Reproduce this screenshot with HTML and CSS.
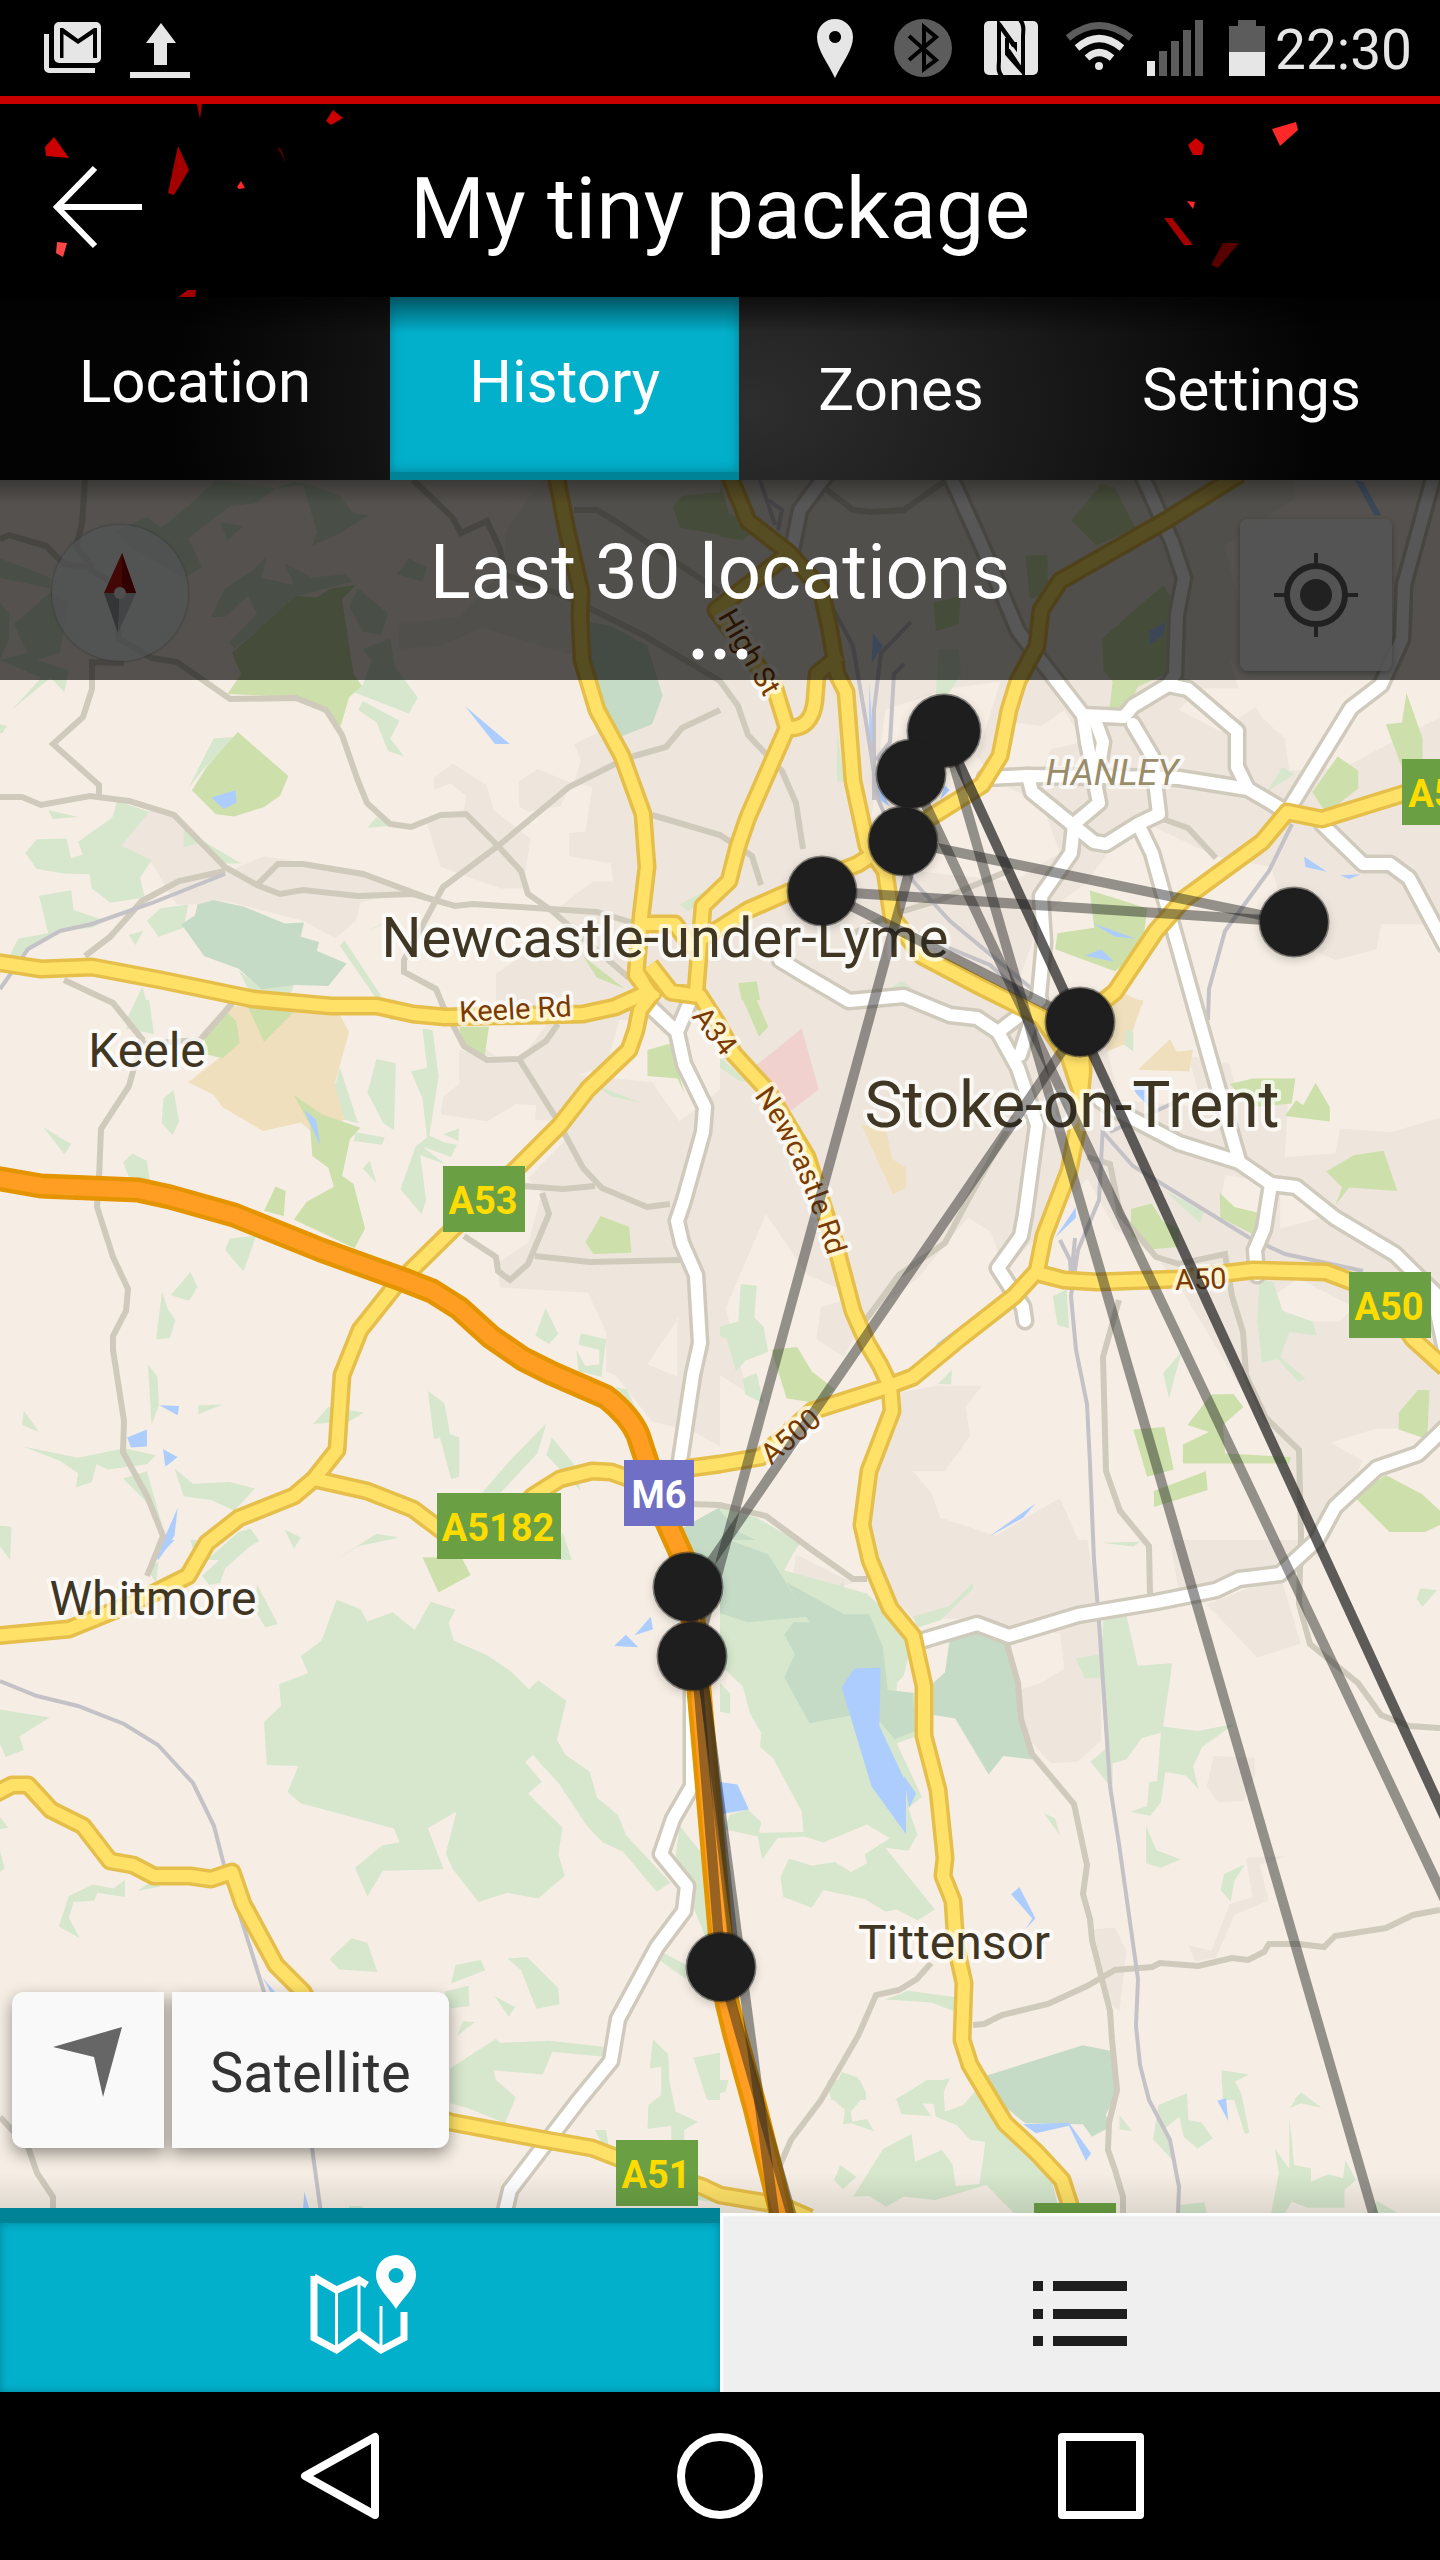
FILE: index.html
```html
<!DOCTYPE html>
<html lang="en">
<head>
  <meta charset="UTF-8">
  <meta name="viewport" content="width=device-width, initial-scale=1.0">
  <title>My tiny package</title>
  <link rel="stylesheet" href="styles.css">
</head>
<body>
  <!-- Status bar -->
  <div class="status-bar">
    <svg class="status-left" viewBox="36 0 164 96" width="164" height="96">
      <path class="lit" fill-rule="evenodd" d="M59 22H96a5 5 0 0 1 5 5V58a5 5 0 0 1-5 5H59a5 5 0 0 1-5-5V27a5 5 0 0 1 5-5ZM60 28V58H63.500V34L78 44L93 34V58H97V28H94L78 39L63 28Z"/>
      <path class="lit" d="M44 34H49V68H95V73H49a5 5 0 0 1-5-5Z"/>
      <path class="lit" d="M161 23L176 43H167V65H154V43H146ZM130 72H190V78H130Z"/>
    </svg>
    <svg class="status-right" viewBox="805 0 466 96" width="466" height="96">
      <path class="lit" fill-rule="evenodd" d="M835 19a18 18 0 0 1 18 18C853 50 842 63 835 78C828 63 817 50 817 37a18 18 0 0 1 18-18ZM835 31a6 6 0 1 0 .1 0Z"/>
      <circle class="dim" cx="923" cy="48" r="29"/>
      <path d="M909 36L936 60L924 69V27L936 37L909 60" fill="none" stroke="#000" stroke-width="4"/>
      <rect class="lit" x="984" y="21" width="54" height="54" rx="5"/>
      <path d="M1002 76C997 72 999 66 999 60V24L1014 46M1020 20C1025 25 1023 31 1023 37V72L1008 50" fill="none" stroke="#000" stroke-width="4"/>
      <path d="M999 24L1015 46V42M1007 38V54L1023 72" fill="none" stroke="#000" stroke-width="4"/>
      <g fill="none" stroke-width="7">
        <path stroke="#5c5c5c" d="M1068 38Q1099 13 1131 38"/>
        <path stroke="#e6e6e6" d="M1077 48Q1099 29 1122 48M1087 58Q1099 47 1112 58"/>
      </g>
      <circle class="lit" cx="1099" cy="66" r="4"/>
      <path class="lit" d="M1147 61h8v15h-8Z"/>
      <path class="dim" d="M1159 51h8v25h-8ZM1171 41h8v35h-8ZM1183 30h8v46h-8ZM1195 20h8v56h-8Z"/>
      <path class="dim" d="M1238 20h18v6h9v26h-36v-26h9Z"/>
      <path class="lit" d="M1229 52h36v24h-36Z"/>
    </svg>
    <time class="clock">22:30</time>
  </div>

  <!-- Header -->
  <header class="header">
    <svg class="shards" viewBox="0 104 1440 193" preserveAspectRatio="xMidYMid slice">
      <path fill="#cc0000" d="M54 137L69 158L46 156L45 147ZM333 110L343 118L331 125L326 121ZM1188 145L1196 138L1204 145L1202 155L1193 155Z"/>
      <path fill="#a50000" d="M178 146L189 170L174 195L168 193ZM197 104L202 104L200 119ZM178 297L188 290L196 290L195 297ZM1164 218L1172 218L1193 245L1184 245Z"/>
      <path fill="#560000" d="M277 147L281 149L286 163ZM1223 243L1239 243L1218 268L1211 265Z"/>
      <path fill="#ff2828" d="M1272 129L1296 122L1298 130L1280 146ZM237 187L241 181L245 188L239 189ZM1187 201L1195 202L1193 209Z"/>
      <path fill="#ff4646" d="M57 242L67 243L63 257L56 253Z"/>
    </svg>
    <button class="back" aria-label="Back">
      <svg viewBox="0 0 100 90" width="100" height="90"><path d="M48 6L10 45L48 84M10 45H95" fill="none" stroke="#fff" stroke-width="6"/></svg>
    </button>
    <h1 class="title">My tiny package</h1>
  </header>

  <!-- Tabs -->
  <nav class="tabs">
    <a class="tab tab-raised" href="#location">Location</a>
    <a class="tab tab-raised tab-active" href="#history">History</a>
    <a class="tab" href="#zones">Zones</a>
    <a class="tab" href="#settings">Settings</a>
  </nav>

  <!-- Map -->
  <main class="map">
    <svg class="map-canvas" viewBox="0 480 1440 1733" preserveAspectRatio="xMidYMid slice">
      <defs>
        <path id="motorway" d="M-5 1178L41 1186L138 1190L170 1197L234 1215L321 1250L404 1280L432 1291L459 1308L491 1337L523 1359L551 1373L606 1397Q630 1416 638 1435L666 1520L684 1560Q694 1610 699 1690L720 1930L727 2002L735 2035L755 2107L783 2220"/>
        <g id="a-roads">
          <path d="M556 475L567 531L581 592L580 617L582 660L597 710L622 756L643 814L647 867L641 917L636 975L655 1000"/>
          <path d="M-5 962L41 969L92 967L161 980L253 999L331 1006L377 1006L413 1014L445 1017L583 1014L615 1007L648 992L636 970"/>
          <path d="M655 990L640 1010L636 1030L629 1050L588 1089L560 1125L519 1166L450 1232L395 1286L360 1330L342 1375L337 1450L314 1479L294 1496L239 1518L207 1543L188 1576L138 1601L69 1629L-5 1636"/>
          <path d="M314 1479L367 1491L413 1509L445 1533L500 1530L533 1496L560 1479L592 1471L611 1472L650 1486L690 1468L720 1464L761 1457L812 1411L881 1389L913 1377L959 1339L1014 1296L1037 1271L1044 1236L1069 1171L1078 1125L1083 1071L1080 1021"/>
          <path d="M729 475L748 521L789 553L821 589L830 631L837 674L846 692L853 781L867 846L885 871L892 917L922 956L977 985L1041 1017L1069 1057L1083 1100"/>
          <path d="M789 553L716 610L748 653L775 689L787 728Q812 730 815 700L817 674L840 655"/>
          <path d="M787 728L748 817L738 846L729 881L703 906L696 992"/>
          <path d="M641 924L675 924L690 945L720 928L748 910L789 892L858 864L931 817L982 785L1000 756L1009 710L1018 681L1037 646L1041 610L1060 581L1165 521L1240 474"/>
          <path d="M1080 1020L1115 992L1156 931L1184 899L1262 842L1287 812L1322 819L1409 792L1445 780"/>
          <path d="M1037 1273L1064 1280L1097 1282L1179 1279L1253 1270L1326 1272L1363 1286L1400 1320L1413 1339L1445 1368"/>
          <path d="M650 965L671 992L700 996L716 1021L734 1054L766 1089L807 1157L835 1243L853 1311L867 1343L880 1365L890 1386L892 1411L869 1471L862 1525L870 1560L890 1608L913 1636L924 1686L924 1736L938 1790L945 1858L943 1876L953 1901L956 1947L964 1983L962 2040L970 2065L991 2100L1005 2123L1037 2153L1062 2180L1075 2220"/>
          <path d="M-5 1794L12 1785L28 1785L51 1810L83 1826L110 1861L133 1865L154 1876L190 1876L211 1879L232 1872L243 1904L276 1965L303 1992L360 2090L450 2122L546 2140L592 2148L618 2158L703 2187L720 2195L780 2205L810 2218"/>
        </g>
        <g id="b-roads">
          <path d="M643 1000L677 1032L684 1064L705 1107L703 1132L684 1200L677 1221L682 1243L696 1275L700 1343L693 1375L680 1461M689 1004L677 1032"/>
          <path d="M692 1690L692 1786L673 1819L661 1854L687 1886L684 1911L657 1947L618 2019L611 2061L579 2100L546 2143L510 2190L503 2220"/>
          <path d="M950 475L982 546L1018 631L1083 715L1124 717L1133 706L1168 685L1188 689L1237 731L1237 767L1248 789L1287 812"/>
          <path d="M1142 475L1172 542L1184 578L1177 614L1175 674L1168 685M826 475L800 510L792 550"/>
          <path d="M1434 475L1404 585L1402 639L1381 685L1351 708L1287 812"/>
          <path d="M985 778L1028 776L1179 778L1248 789M1095 720L1103 742L1100 760"/>
          <path d="M1083 715L1087 742L1099 803L1074 824L1071 853L1041 896L1044 942L1039 996L1020 1055"/>
          <path d="M1133 724L1152 756L1159 814L1138 824L1106 844L1094 842L1032 792L1028 776"/>
          <path d="M1140 828L1152 853L1198 1017L1239 1161"/>
          <path d="M1100 1100L1110 1107L1179 1143L1239 1162L1271 1184L1296 1187L1335 1218L1395 1254L1445 1303M1445 1350L1432 1290"/>
          <path d="M1271 1184L1264 1229L1255 1250L1257 1275"/>
          <path d="M780 960L803 974L849 1001L904 996L950 1015L977 1018L998 1032L1018 1068L1037 1125L1025 1214L1021 1236L998 1268L1023 1307L1025 1321M998 1032L1040 1000"/>
          <path d="M917 1642L977 1624L1009 1636L1078 1615L1156 1602L1216 1590L1239 1579L1280 1574L1317 1540L1335 1507L1377 1468L1418 1454L1445 1428"/>
          <path d="M1322 824L1363 864L1390 864L1409 878L1445 945"/>
        </g>
        <path id="newcastle-rd" d="M754 1096Q796 1150 832 1270"/>
      </defs>

      <rect class="ground" x="0" y="470" width="1440" height="1760"/>

      <!-- land use, one group per tile -->
      <g transform="translate(0 460) scale(.4592 .3571)">
        <path class="urban" d="M1100 200L1180 56H1568V1568H1080V1440L1230 1300L1210 1260L1290 1180H1335L1330 1130L1240 1110V1045L1275 1040L1290 915L1250 905L1265 840L1250 795L1300 765L1280 560L1050 470L960 520L870 530L865 460L1000 440L1100 300Z"/>
        <path class="urban" d="M945 890L985 850L1060 910L1075 980L1155 1060L1140 1200H1090L960 1140L930 1020L1010 980L1015 940L980 905L945 925ZM1130 900L1170 865L1245 905L1220 970L1150 985L1130 970ZM330 975L380 995L500 1150L575 1110L780 1150L880 1210L785 1240L775 1290L730 1340L660 1290L490 1235L430 1245H385L330 1130L265 1080Z"/>
        <path class="wood" d="M400 140L470 56L600 80L560 120L500 130L410 220L440 300L400 330L280 240L250 200L320 160L350 190ZM600 80L660 70L690 200L680 240L740 205L805 155L770 150L740 100L690 75L640 60ZM480 175L530 185L495 225ZM0 275L110 330V360L0 330ZM0 400L20 430V500L0 560ZM30 460L110 370L150 400L130 540L80 560L150 590L140 650L110 610L25 700L90 610L0 560L60 540ZM460 440L490 360L550 310L580 270L570 330L640 350L620 290L680 330L750 320L770 340L650 380L510 530L500 510L560 430L540 380L490 440ZM865 320L890 275L930 300L920 340ZM780 360L845 430L830 490L790 480L760 410ZM790 530L850 500L860 580L910 665L890 710L770 650L790 630L810 560ZM790 675L870 730L850 780L880 830L845 815L820 735L780 700ZM465 780L515 775L440 870L410 920ZM0 740L15 745L5 765H0ZM105 980L170 1000L115 1005ZM255 955L325 985L265 1080L330 1120L305 1170L315 1225L240 1240L200 1200L195 1160L140 1158L80 1145L55 1100L80 1062L145 1060L155 1115L180 1105L170 1070L245 1000ZM400 1035L525 1130L490 1130L440 1070L400 1085ZM820 1000L850 1025L800 1030ZM85 1220L155 1205L160 1260L230 1290L200 1310L120 1320L50 1380L0 1440L40 1340L105 1325ZM320 1290L350 1255L410 1245L400 1310L345 1335ZM280 1330L312 1318L295 1358ZM520 1430L570 1480L640 1470L620 1540L560 1530ZM750 1345L830 1500L820 1510L740 1360ZM310 1475L330 1568H275ZM800 1320L870 1280L830 1300ZM1480 1245L1545 1200L1500 1265ZM830 1540L890 1568H850Z"/>
        <path class="park" d="M645 380L690 385L720 360L775 350L745 390L770 600L788 632L760 665L742 745L700 700L650 665L495 655L525 600L505 540ZM518 762L628 885L610 940L575 972L510 998L470 992L418 925L450 860ZM1465 130L1485 100L1568 90V210L1480 190ZM1270 1390L1360 1480L1300 1450ZM530 1568L640 1510L700 1568Z"/>
        <path class="forest" d="M1270 450L1330 465L1410 520L1443 660L1420 740L1355 773L1310 700L1290 580ZM395 1300L425 1275L430 1245L465 1233L530 1250L620 1298L662 1295L655 1335L695 1350L690 1375L755 1410L715 1473L645 1470L570 1482L520 1425L445 1390Z"/>
        <path class="water" d="M1012 688L1110 795H1078ZM460 945L513 925L515 960L487 977Z"/>
        <path class="golf" d="M500 1530L640 1530L740 1568H480Z"/>
      </g>
      <g transform="translate(720 460) scale(.4592 .3571)">
        <path class="urban" d="M0 56H1250V110L1100 240L1130 400V620L1180 720L1230 780L1240 870L1360 860L1568 720V1300H1440L1430 1370L1340 1400L1250 1350L1200 1140L1080 1110L900 1000L800 1180L700 1280L620 1568H0Z"/>
        <path class="ground" d="M500 640L610 620L560 830L600 900L700 960L740 1100L640 1180L420 1150L330 1000L360 700ZM640 735L700 745L750 700L790 790L720 810L700 870L600 870ZM1040 640L1130 640L1110 560L1200 660L1090 760L1000 700Z"/>
        <path class="park" d="M830 68L860 78L905 190L820 240L765 170ZM665 268L713 265L715 370L675 390ZM465 400L525 380L520 460L470 480ZM965 350L985 390V590L910 635L890 690L848 695L855 620L835 590L832 500ZM1495 652L1530 780V860L1485 860L1450 740L1485 735ZM1345 830L1390 870V920L1320 990L1290 930ZM805 1205L930 1255L920 1370L860 1432L730 1370L735 1325L815 1310ZM40 1465L80 1460L95 1568H55ZM0 60L20 150L80 190L50 225L0 215Z"/>
        <path class="wood" d="M475 530L520 530L525 600L490 670L470 660ZM1225 860L1250 880L1190 930ZM255 760L270 900H255ZM395 1458L420 1480L370 1480Z"/>
        <path class="golf" d="M860 1480L922 1520L900 1568H850Z"/>
        <path class="water" d="M970 455L965 490L935 518V478ZM1382 56L1400 60L1440 155H1425ZM333 485L355 520L330 570ZM325 620L340 900L370 970L345 950L325 760ZM1272 1110L1322 1153L1275 1140ZM1350 1163L1395 1160L1370 1173ZM812 1297L905 1340L860 1335ZM795 1388L830 1370L858 1405ZM490 910L500 925L480 950Z"/>
      </g>
      <g transform="translate(0 1000) scale(.4592 .3571)">
        <path class="urban" d="M980 50L1060 165L1130 170L1190 70L1350 50L1320 190L1240 215L1190 200L1420 230L1480 340L1568 250V1250L1510 1210L1420 1180L1340 1050L1320 1040V930L1280 820L1090 805L1080 740L1150 680L1180 540L1150 500L1240 380L1220 340L1165 335L1168 295L1100 290L1070 240L1080 160ZM960 320L965 270L1000 235L1000 140L1080 160L1075 235L1120 295L1060 340Z"/>
        <path class="ground" d="M1480 890L1440 960L1410 1020L1475 1055V890Z"/>
        <path class="golf" d="M505 25L740 40L760 90L730 230L750 335L680 370L655 343L573 367L485 300L465 265L410 230L520 120Z"/>
        <path class="park" d="M495 35L515 60L522 120L485 163L440 150L450 90ZM540 20L650 20L575 117ZM640 265L700 320L785 358L762 390L745 492L770 515L795 640L772 695L640 615L668 565L727 523L715 470L680 437L675 350ZM600 522L622 535L618 605L575 590ZM1000 75H1065L1055 158L1010 130ZM1410 140L1460 122L1490 260L1475 220L1410 213ZM1308 605L1370 635L1375 708L1292 711L1275 678Z"/>
        <path class="wood" d="M300 0L325 0L335 95L275 80ZM740 190L780 345L750 335L730 240ZM820 165L862 177L858 365L835 345L800 260ZM920 80L942 85L955 215L935 380L970 400L995 405L982 440L920 410L970 460L915 435L928 560L918 600L872 530L905 410L930 385L920 275L895 200L930 190ZM965 375L1000 360L998 395ZM775 370L838 385L832 405L770 395ZM378 252L390 340L376 378L352 345L356 275ZM95 357L155 403L140 433ZM288 430L320 450L327 512L285 508L268 455ZM805 450L820 513L790 472ZM500 668L558 660L530 760L490 700ZM415 762L430 803L412 843L372 826ZM353 815L365 865L382 897L370 947L340 950ZM322 1020L343 1055L346 1135L330 1190ZM432 1135L485 1133L432 1160ZM52 1150L85 1210L48 1190ZM50 1250L170 1282L270 1255L340 1275L320 1300L235 1315L210 1300L200 1350L165 1365L170 1325L130 1290ZM380 1312L420 1355L500 1350L555 1368L510 1430L460 1400L400 1390ZM268 1340L320 1320L355 1480L330 1420ZM520 1490L545 1480L565 1515L490 1568H450ZM620 1483L655 1505L640 1537ZM730 1568L820 1495L870 1505L780 1530ZM682 1187L715 1140L793 1155L760 1180ZM932 1095L968 1130L980 1215L1000 1225V1335L983 1342L958 1225L945 1230ZM1190 1185L1170 1270L1090 1380L1050 1380L1110 1290ZM1202 1225L1250 1300L1265 1375L1190 1275ZM1188 863L1216 935L1195 963L1166 940ZM1265 933L1320 950L1310 1055L1260 1040L1255 980L1275 1025L1305 1020V980L1260 965ZM0 1472L25 1475L22 1568L0 1530ZM1340 1085L1365 1090L1420 1240L1400 1220ZM1300 240L1395 287L1330 270ZM1225 1490L1245 1568H1210Z"/>
        <path class="forest" d="M1470 1490L1568 1420V1568H1490Z"/>
        <path class="water" d="M662 307L688 335L698 410ZM347 1135L390 1137L387 1163ZM277 1225L320 1203V1250L285 1253ZM355 1258L387 1280L360 1307ZM387 1422L380 1500L345 1568L340 1560Z"/>
      </g>
      <g transform="translate(720 1000) scale(.4592 .3571)">
        <path class="urban" d="M0 0H720L900 110L1000 150L1110 180L1120 230L1240 220L1230 440L1340 430L1350 360L1460 370L1568 330V1200L1430 1200L1330 1240L1400 1290L1300 1568L1240 1350L1140 1100L1000 800L950 720L860 640L800 500L700 650L620 760L590 650L540 610L500 670L430 780L310 900L270 1000L210 950L220 860L300 830L190 770L100 600L0 900V800L60 1100L0 1050ZM470 1080H570L535 1140L545 1220L490 1320H420L460 1380L480 1450L600 1500L740 1395L800 1568H350L310 1450L330 1300L390 1100Z"/>
        <path class="ground" d="M1100 490L1190 510L1170 620L1090 560ZM1220 530L1340 600L1220 640ZM830 70L1000 60L1050 300L870 280ZM1180 850L1260 780L1380 860L1350 900L1200 900Z"/>
        <path class="pink" d="M72 190L178 80L215 250L155 310Z"/>
        <path class="golf" d="M308 350L360 355L375 445L405 470V525L377 545ZM910 195L980 110L995 145L1030 140L1022 200ZM860 0H922L890 120L840 145Z"/>
        <path class="park" d="M50 0H80L105 75L85 103ZM1110 235L1160 220H1253L1245 290L1160 300ZM1297 232L1328 300V340L1230 325L1255 280L1270 295ZM1380 435L1445 422L1475 535L1370 525L1340 575L1355 525L1320 480ZM895 585L940 570L965 620L1000 640V692L945 697L895 660ZM1088 540L1120 580L1170 595L1167 660L1090 610ZM112 980L168 972L200 1040L250 1090L215 1130L145 1115ZM1070 1105L1118 1103L1140 1140L1095 1190L1100 1270L1243 1280L1240 1298H1008V1245L1065 1210L1018 1190ZM900 1203L968 1196L988 1315L930 1335ZM945 1375L1058 1320L1062 1372L945 1420ZM1380 1390L1450 1330L1530 1385L1568 1430V1470L1535 1490H1458ZM1520 1092L1545 1093L1540 1230L1478 1203V1155Z"/>
        <path class="wood" d="M0 160L60 230L40 225L0 190ZM45 795L80 800L75 890L95 915L105 985L55 1010L35 1040L15 950L0 940V915L40 900ZM50 1060L80 1045L95 1130L55 1105ZM725 830L755 810L760 920L735 910ZM1175 780L1205 790L1225 870L1290 900L1300 940L1240 930L1220 1000L1275 1060L1260 1070L1215 1005L1180 1015L1170 900ZM965 1045L1005 985L978 1115ZM505 1035L503 1077L475 1075ZM0 1420L80 1450L175 1520L150 1568H0ZM970 535L1055 590L1045 625ZM885 80L900 90V145L880 125Z"/>
        <path class="forest" d="M0 1430L40 1490L90 1520L110 1568H0Z"/>
        <path class="water" d="M585 1503L687 1410L660 1450ZM470 965L590 850L480 965ZM730 665L775 580V610ZM900 240H925L935 300L905 260ZM135 520V835Z"/>
      </g>
      <g transform="translate(0 1540) scale(.4592 .3571)">
        <path class="wood" d="M733 167L785 193L800 228L855 202L903 252L938 173L992 195L977 232L988 282L1060 322L1115 370L1152 418L1172 393L1233 450L1213 560L1232 602L1284 648L1300 722L1346 770L1363 826L1460 960L1430 985L1357 873L1313 847L1278 800L1216 680L1160 602L1144 622L1180 677L1150 710L1225 805L1216 880L1230 940L1172 1004L1105 988L1042 1014L985 920L971 877L994 760L932 807L966 922L834 926L800 998L773 918L833 855L870 847L858 808L655 737L626 706L650 633L581 630L575 510L612 465L608 403L671 373L655 325L700 282ZM765 1115L800 1128L822 1210L738 1203L718 1173ZM992 1190L1047 1176L1057 1205L982 1242ZM1105 1172L1148 1168L1216 1255L1218 1300L1168 1313L1135 1205ZM968 1265L1020 1248L1022 1305L980 1312ZM1077 1277L1122 1308L1108 1335ZM1008 1348L1035 1350L996 1388ZM980 1480L1080 1397L1088 1408L1195 1402L1320 1420L1315 1447L1203 1433L1182 1497L1075 1485L1090 1568H980ZM0 475L108 497L42 550L52 588L12 608L0 570ZM272 952V1000L212 988L205 1010L160 1014L150 1058L174 1115L128 1082L150 997L203 965L247 976ZM300 982L330 955L350 970ZM560 125L605 235L578 245L555 195ZM1480 800L1530 880L1545 1140L1470 900ZM1435 1150L1495 1190V1230L1440 1180ZM1422 1398L1455 1440L1460 1568H1440V1475L1415 1480ZM1510 1450L1568 1435V1568H1540ZM440 100L500 30L560 0L490 80L480 120L455 125ZM0 775L18 805L0 810ZM0 870L10 920L0 930ZM415 0L440 0L420 25ZM320 80L345 60L340 120Z"/>
        <path class="park" d="M920 48L1005 48L1025 98L955 147Z"/>
        <path class="forest" d="M1480 0H1568V120L1510 60Z"/>
        <path class="water" d="M1363 265L1390 300L1337 297ZM1417 215L1422 250L1382 267ZM355 0H380L333 65ZM572 1225L600 1268H590Z"/>
      </g>
      <g transform="translate(720 1540) scale(.4592 .3571)">
        <path class="urban" d="M330 0H800L830 220V560L780 620L720 625L660 540L650 420L700 400L750 360L740 260L620 260L560 220H420L350 120ZM980 0H1310L1220 100L1000 150ZM1060 180L1220 100L1265 290L1170 330ZM1075 605L1165 610V660L1140 730L1085 735L1060 690ZM810 1090L860 1085L885 1150L870 1320L850 1300L815 1180ZM1145 890L1235 885L1175 910L1195 1010L1120 1050L1080 1170L1035 1180L1020 1135L1070 1150L1110 1020L1160 1000ZM165 40L290 120L240 140L160 90Z"/>
        <path class="wood" d="M0 0H175L140 85L320 150L420 270L400 380L385 400V425L425 430V550L385 570L440 720L410 750L430 825L410 870L360 862L468 1035L430 1065L385 1035L360 1040L315 1005L225 980L200 1030L138 1000L132 945L150 892L200 912L250 902L285 930L320 905L315 880L370 835L320 797L225 847L185 830L125 835L92 895L82 830L10 810L20 770L60 755L90 790L85 820L182 818L178 760L115 610L87 580L90 540L65 485L50 410L0 350ZM420 215L500 185L550 120L552 135L480 225L430 245ZM268 115L275 190L240 165ZM835 220L885 210L910 352L985 345L965 522L1040 535L1120 515L1050 580L1030 635L1043 700L1015 660L970 650L960 735L937 772L893 762L930 745L935 678L952 675L960 540L918 555L885 615L855 625V700L807 620L840 585L830 385L795 388L775 332L830 320ZM928 800L950 868L1003 895L960 918L928 905ZM705 765L730 780L740 827ZM1143 908L1120 955L1112 1012L1090 980L1098 935ZM1525 135L1562 140L1530 187L1517 165ZM360 1287L410 1262L510 1280V1320L460 1295ZM0 400L22 430V487L0 480ZM830 8L915 5L900 18ZM265 1490L300 1505L318 1550V1568H240ZM430 1530L500 1507L480 1568H380ZM1092 1485L1152 1497L1115 1520L1120 1568H1095ZM1265 1548L1285 1568H1250Z"/>
        <path class="forest" d="M20 0L105 40L190 215L60 230L0 205V0ZM145 118L270 208H325L355 300L365 420L420 428L425 535L380 558L330 480L195 513L140 385L163 320L140 265L160 230H195ZM500 280L560 250L625 285L650 400V490L680 615L617 605L585 657L512 500L465 490V400L490 370ZM580 1500L790 1415L850 1430L865 1568H600Z"/>
        <path class="water" d="M292 360L350 357L347 520L405 680V823L330 690L265 413ZM400 660L427 710L412 750ZM0 678L38 685L63 755L0 768ZM652 972L687 1060L665 1090L680 1060L634 992Z"/>
      </g>
      <g transform="translate(0 2080) scale(.4592 .3333)">
        <path class="wood" d="M980 0H1080L1123 52L1100 130L1020 85L980 70ZM1443 0H1457L1472 95L1520 125L1490 150V195H1462V137L1410 147L1412 75L1440 45ZM1528 0H1568V45L1545 55ZM1295 150H1320L1325 195L1310 190ZM1520 340L1568 370L1520 360ZM760 378H790V384H760Z"/>
        <path class="water" d="M663 335L673 384H660Z"/>
      </g>
      <g transform="translate(720 2080) scale(.4592 .3333)">
        <path class="wood" d="M235 0H305L318 40L285 95L288 125L320 117L335 153L285 130L268 133L272 90L240 50ZM385 60L450 0H485L490 95L530 75L555 35L640 140L720 290L740 400H640L580 315L470 360L400 350L362 380L325 348L290 350L355 207L417 162L425 245L483 210L507 255L513 318L565 312L578 185L545 180L515 135L470 110L465 72L440 70L460 108L395 103ZM262 255L297 290L268 328L248 300ZM955 75L1017 40L1020 120L1048 127L1073 175L1040 206L1010 170L1000 110L965 150L980 185L985 240L943 178ZM1092 0H1120L1135 40L1153 158L1143 162L1115 40L1095 20ZM1265 37L1310 83L1265 70L1240 85ZM1240 110L1250 255L1287 265V305L1325 283L1357 295L1362 240L1385 300L1360 330V383H1280L1245 365L1230 400H1200L1217 280L1208 205L1240 268ZM870 105L897 153L870 148ZM0 0H18L12 35L0 40ZM1000 375L1055 367L1060 400H1000ZM1430 362L1475 398H1420Z"/>
        <path class="forest" d="M590 0H865L860 50L840 105L850 140L810 170L790 133L665 130L620 80Z"/>
        <path class="water" d="M660 133L760 128L808 220L797 243L760 137L688 160ZM1083 62L1102 55L1107 123Z"/>
      </g>

      <!-- lanes and railways -->
      <g class="lane">
        <path d="M85 480L82 524L76 546L92 567"/>
        <path d="M0 539L9 535L46 546L64 564L87 567L115 585L119 639L152 658L177 662L230 699L296 698L326 710L342 735L358 781L367 803L390 824L411 827L441 815L466 814L498 846L521 871L528 894L551 910L629 978"/>
        <path d="M124 663L92 662V689L83 717L53 744L99 785V796"/>
        <path d="M0 797H22L41 805L90 796L129 801L174 815L225 867L257 885L280 894L303 890L358 896L413 894L455 906L473 904L597 912L640 925"/>
        <path d="M257 885L278 864H303L363 874L436 901"/>
        <path d="M634 756L615 764L569 787L498 846L443 887L404 960V972L436 989L443 1006L464 1046L487 1060L519 1059L546 1041L558 1024"/>
        <path d="M519 1059L556 1118L583 1168L602 1188L647 1207L670 1204"/>
        <path d="M225 871L179 881L142 901L110 937L85 956"/>
        <path d="M523 1186L563 1189L595 1186M542 1193L549 1214L528 1264L510 1280L498 1271L496 1257L464 1236M535 1256L590 1262L680 1260"/>
        <path d="M64 980L113 1003L142 1039L129 1086L101 1129L99 1179L97 1207L113 1257L128 1289L126 1311L113 1336V1350L124 1421L123 1452L147 1496L163 1536L147 1576"/>
        <path d="M142 1044L200 1040L235 1000"/>
        <path d="M413 480L452 517L461 533L487 521L500 549L505 575L565 596L643 635L720 681L738 706L748 735L782 771L796 803L803 849"/>
        <path d="M574 510H597L620 524L720 592M720 710L682 728L666 747L634 756M652 815L720 835L752 856L761 885"/>
        <path d="M826 489L853 510L872 512L904 510L945 481M1163 819L1188 828L1216 858"/>
        <path d="M1087 1157L1110 1164L1120 1214L1156 1257L1179 1264L1225 1254L1232 1296L1243 1332L1246 1375L1266 1418L1299 1450L1301 1536L1299 1604L1310 1644L1358 1683L1381 1715L1409 1726L1440 1728"/>
        <path d="M1119 1300L1103 1357L1106 1471L1120 1511L1149 1546L1150 1594M1014 1118L968 1200L945 1243L899 1275L865 1321"/>
        <path d="M690 1504L720 1505L766 1516L812 1550L853 1579H867"/>
        <path d="M1007 1644L1018 1683L1021 1719L1032 1754L1074 1804L1087 1865L1083 1894L1090 1919L1092 1940L1110 2011L1112 2040L1117 2090L1109 2123L1108 2150L1115 2170L1123 2197V2213"/>
        <path d="M973 2025L984 2024L1002 2015L1048 2004L1087 1986L1115 1970L1152 1967L1160 1963L1198 1966L1232 1958L1248 1960L1264 1952L1269 1944H1299L1324 1947L1335 1936L1386 1928L1413 1915L1440 1910"/>
        <path d="M931 1963L917 1979L899 1990L876 1995L858 2036L821 2100L791 2140L780 2165M0 2117L28 2147L37 2173L53 2197V2213"/>
        <path d="M850 935L890 915L940 900L1010 870"/>
      </g>
      <g class="rail">
        <path d="M225 874L152 903L92 924L60 931L28 949L0 989"/>
        <path d="M0 1681L37 1696L78 1706L124 1724L158 1745L193 1783L214 1826L225 1869L250 1947L264 1992L312 2148L321 2213"/>
        <path d="M1292 824L1269 871L1225 931L1209 989L1208 1020"/>
        <path d="M1103 1125L1099 1200L1078 1250L1071 1296L1076 1350L1087 1404L1090 1464L1094 1560L1099 1622L1110 1786L1119 1844L1138 1979L1136 2026L1140 2065L1149 2100L1170 2140L1179 2187L1178 2213"/>
        <path d="M1103 1132L1133 1166L1248 1237L1285 1254L1363 1271M1110 1132L1180 1100"/>
        <path d="M830 603L853 646L867 728L878 799L913 881L950 921L1032 989M911 622L881 653L874 710V800M904 664L894 674L890 742L876 760M930 940L990 965L1040 1010"/>
        <path d="M760 480L775 525M768 500L782 510L778 530M1060 1240L1070 1260L1072 1290M1075 1238L1070 1290"/>
      </g>

      <!-- roads: casing first, then the surface -->
      <use href="#b-roads" class="road b-casing"/>
      <use href="#b-roads" class="road b-surface"/>
      <use href="#a-roads" class="road a-casing"/>
      <use href="#a-roads" class="road a-surface"/>
      <use href="#motorway" class="road m-casing"/>
      <use href="#motorway" class="road m-surface"/>

      <!-- road names -->
      <g class="road-name">
        <text transform="translate(516 1019) rotate(-3)">Keele Rd</text>
        <text transform="translate(707 1037) rotate(52)">A34</text>
        <text transform="translate(797 1444) rotate(-40)">A500</text>
        <text transform="translate(1201 1289) rotate(-2)">A50</text>
        <text transform="translate(741 657) rotate(60)">High St</text>
        <text class="along"><textPath href="#newcastle-rd">Newcastle Rd</textPath></text>
      </g>

      <!-- places -->
      <g class="place">
        <text class="town" x="665" y="957">Newcastle-under-Lyme</text>
        <text class="city" x="1072" y="1127">Stoke-on-Trent</text>
        <text x="147" y="1067">Keele</text>
        <text x="153" y="1615">Whitmore</text>
        <text x="954" y="1959">Tittensor</text>
        <text class="district" x="1112" y="785">HANLEY</text>
      </g>

      <!-- road shields -->
      <g class="shield">
        <rect x="443" y="1166" width="82" height="66"/><text x="483" y="1214">A53</text>
        <rect x="437" y="1493" width="124" height="66"/><text x="498" y="1541">A5182</text>
        <rect x="1349" y="1272" width="82" height="66"/><text x="1389" y="1320">A50</text>
        <rect x="1402" y="759" width="82" height="66"/><text x="1432" y="807">A5</text>
        <rect x="616" y="2140" width="82" height="66"/><text x="656" y="2188">A51</text>
        <rect x="1034" y="2203" width="82" height="66"/>
      </g>
      <g class="shield shield-motorway">
        <rect x="624" y="1460" width="70" height="66"/><text x="659" y="1508">M6</text>
      </g>

      <!-- location history -->
      <g class="track">
        <path d="M903 841L1294 922"/>
        <path d="M822 891L1294 922"/>
        <path d="M822 891L1080 1022"/>
        <path d="M912 862L695 1656"/>
        <path d="M1082 1022L702 1575"/>
        <path d="M944 731L1445 1818"/>
        <path d="M944 731L1445 1818"/>
        <path d="M944 731L1375 2220"/>
        <path d="M911 774L1445 1900"/>
        <path d="M696 1656L721 1967"/>
        <path d="M688 1587L706 1700L736 1967"/>
        <path d="M700 1656L775 2220"/>
        <path d="M721 1967L793 2220"/>
      </g>
      <g class="pins">
        <circle cx="944" cy="731" r="36"/>
        <circle cx="911" cy="774" r="34"/>
        <circle cx="903" cy="841" r="34"/>
        <circle cx="822" cy="891" r="34"/>
        <circle cx="1294" cy="922" r="34"/>
        <circle cx="1080" cy="1022" r="34"/>
        <circle cx="688" cy="1587" r="34"/>
        <circle cx="692" cy="1656" r="34"/>
        <circle cx="721" cy="1967" r="34"/>
      </g>
    </svg>

    <button class="compass" aria-label="Compass">
      <svg viewBox="0 0 136 136" width="136" height="136">
        <path fill="#c41a14" d="M70 28L52 68H84Z"/>
        <path fill="#8c0a08" d="M70 28V68H84Z"/>
        <path fill="#9a9ca0" d="M52 68H68L66 108Z"/>
        <path fill="#c4c6ca" d="M68 68H84L66 108Z"/>
        <circle fill="#e4e4e4" cx="68" cy="68" r="6"/>
      </svg>
    </button>
    <button class="locate" aria-label="My location">
      <svg viewBox="0 0 90 90" width="90" height="90">
        <g fill="none" stroke="#606060"><circle cx="45" cy="45" r="29" stroke-width="6"/><path d="M45 3V16M45 74V87M3 45H16M74 45H87" stroke-width="4"/></g>
        <circle cx="45" cy="45" r="16" fill="#606060"/>
      </svg>
    </button>

    <section class="summary">
      <h2 class="summary-title">Last 30 locations</h2>
      <svg class="summary-more" viewBox="0 0 60 12" width="60" height="12"><g fill="#fff"><circle cx="8" cy="6" r="5.500"/><circle cx="30" cy="6" r="5.500"/><circle cx="52" cy="6" r="5.500"/></g></svg>
    </section>

    <div class="map-actions">
      <button class="map-button map-button-icon" aria-label="Heading">
        <svg viewBox="0 0 70 86" width="70" height="86"><path fill="#666" d="M69 0L50 70L41 30L0 20Z"/></svg>
      </button>
      <button class="map-button">Satellite</button>
    </div>
  </main>

  <!-- Map / list switch -->
  <nav class="views">
    <button class="view view-active" aria-label="Map view">
      <svg viewBox="0 0 120 120" width="120" height="120">
        <g fill="none" stroke="#fff">
          <path stroke-width="7" d="M14 28V90L36.500 102L59 86L81 102L104 90V64M14 29L36.500 42L59 32L67 37"/>
          <path stroke-width="3" d="M36.500 42V100M59 32V86M81 58V100"/>
        </g>
        <path fill="#fff" fill-rule="evenodd" d="M96 7a20 20 0 0 1 20 20C116 40 104 48 96 61C88 48 76 40 76 27a20 20 0 0 1 20-20ZM96 20a7.500 7.500 0 1 0 .1 0Z"/>
      </svg>
    </button>
    <button class="view" aria-label="List view">
      <svg viewBox="0 -22 94 88" width="94" height="88"><path fill="#1e1e1e" d="M0 0h10v10H0ZM20 0h74v10H20ZM0 28h10v10H0ZM20 28h74v10H20ZM0 55h10v10H0ZM20 55h74v10H20Z"/></svg>
    </button>
  </nav>

  <!-- System navigation -->
  <nav class="system-nav">
    <button aria-label="Back"><svg viewBox="0 0 88 88" width="88" height="88"><path d="M80 5V83L10 44Z"/></svg></button>
    <button aria-label="Home"><svg viewBox="0 0 88 88" width="88" height="88"><circle cx="44" cy="44" r="39"/></svg></button>
    <button aria-label="Recent apps"><svg viewBox="0 0 88 88" width="88" height="88"><path d="M5 5H83V83H5Z"/></svg></button>
  </nav>
</body>
</html>
```
FILE: styles.css
```css
* {
  box-sizing: border-box;
}
body {
  margin: 0;
  min-height: 100vh;
  display: flex;
  flex-direction: column;
  background: #000;
  font-family: Roboto, "Liberation Sans", sans-serif;
  color: #fff;
}
button {
  padding: 0;
  border: 0;
  background: none;
  font: inherit;
  color: inherit;
}
svg {
  display: block;
}
/* Status bar */
.status-bar {
  display: flex;
  align-items: center;
  height: 96px;
  padding: 0 28px 0 36px;
}
.status-right {
  margin-left: auto;
}
.lit {
  fill: #e6e6e6;
}
.dim {
  fill: #5c5c5c;
}
.clock {
  padding: 4px 0 0 4px;
  font-size: 55px;
  color: #e6e6e6;
}
/* Header */
.header {
  position: relative;
  display: flex;
  align-items: center;
  justify-content: center;
  height: 201px;
  border-top: 8px solid #c80000;
}
.shards {
  position: absolute;
  inset: 0;
  width: 100%;
  height: 100%;
}
.back {
  position: absolute;
  left: 47px;
  top: 58px;
}
.title {
  position: relative;
  margin: 0;
  padding-top: 16px;
  font-size: 86px;
  line-height: 100px;
  font-weight: 400;
}
/* Tabs */
.tabs {
  display: flex;
  height: 183px;
  background: linear-gradient(rgba(0, 0, 0, 0.6), transparent 36px), radial-gradient(ellipse 680px 500px at 52% 60%, #2e2e2e, #181818 45%, #030303 85%);
}
.tab {
  flex: 1 1 auto;
  display: flex;
  align-items: center;
  justify-content: center;
  padding-top: 2px;
  font-size: 60px;
  line-height: 72px;
  color: #fff;
  text-decoration: none;
}
.tab-raised {
  padding-top: 0;
  padding-bottom: 14px;
}
.tab-active {
  padding-bottom: 6px;
  border-bottom: 8px solid #008297;
  background: linear-gradient(rgba(0, 50, 60, 0.7), transparent 36px), #03b0cb;
  box-shadow: inset 0 0 12px rgba(0, 80, 95, 0.5);
}
/* Map */
.map {
  position: relative;
  flex: 1 0 auto;
  min-height: 900px;
  overflow: hidden;
  background: #f6eee4;
}
.map::after {
  content: "";
  position: absolute;
  left: 0;
  right: 0;
  bottom: 0;
  height: 40px;
  background: linear-gradient(transparent, rgba(0, 0, 0, 0.1));
}
.map-canvas {
  position: absolute;
  inset: 0;
  width: 100%;
  height: 100%;
}
.ground {
  fill: #f6eee4;
}
.urban {
  fill: #eee6dd;
}
.wood {
  fill: #d6e7cd;
}
.park {
  fill: #cddfab;
}
.forest {
  fill: #c5dbc6;
}
.golf {
  fill: #efdfbc;
}
.pink {
  fill: #f0d1cd;
}
.water {
  fill: #adcdff;
}
.lane {
  fill: none;
  stroke: #cfcabc;
  stroke-width: 6;
}
.rail {
  fill: none;
  stroke: #c4c2c6;
  stroke-width: 4;
}
.road {
  fill: none;
  stroke-linejoin: round;
}
.b-casing {
  stroke: #cfcabc;
  stroke-width: 19;
  stroke-linecap: round;
}
.b-surface {
  stroke: #fff;
  stroke-width: 12;
  stroke-linecap: round;
}
.a-casing {
  stroke: #e6bf4a;
  stroke-width: 19;
}
.a-surface {
  stroke: #ffe168;
  stroke-width: 12;
}
.m-casing {
  stroke: #e49400;
  stroke-width: 25;
}
.m-surface {
  stroke: #ff9e22;
  stroke-width: 16;
}
.place,
.road-name {
  text-anchor: middle;
  stroke: rgba(255, 255, 255, 0.7);
  stroke-width: 8;
  stroke-linejoin: round;
  paint-order: stroke;
}
.place {
  fill: #3f3624;
  font-size: 48px;
}
.town {
  font-size: 56px;
}
.city {
  font-size: 64px;
}
.district {
  fill: #9a8c68;
  font-size: 36px;
  font-style: italic;
}
.road-name {
  fill: #7a3a05;
  font-size: 29px;
}
.along {
  text-anchor: start;
}
.shield {
  fill: #6a9f43;
}
.shield text {
  fill: #ffdc00;
  font-size: 38px;
  font-weight: 700;
  text-anchor: middle;
}
.shield-motorway {
  fill: #6f6fc6;
}
.shield-motorway text {
  fill: #fff;
}
.track {
  fill: none;
  stroke: #1e1e1e;
  stroke-opacity: 0.46;
  stroke-width: 10;
}
.pins {
  fill: #1e1e1e;
  stroke: rgba(30, 30, 30, 0.5);
  stroke-width: 3;
  filter: drop-shadow(0 3px 4px rgba(0, 0, 0, 0.2));
}
.compass {
  position: absolute;
  left: 52px;
  top: 45px;
  border-radius: 50%;
  background: rgba(240, 243, 248, 0.7);
  box-shadow: 0 0 2px 1px rgba(150, 150, 160, 0.5);
}
.locate {
  position: absolute;
  right: 48px;
  top: 39px;
  display: flex;
  align-items: center;
  justify-content: center;
  width: 152px;
  height: 152px;
  border-radius: 8px;
  background: rgba(249, 249, 249, 0.8);
  box-shadow: 0 2px 6px rgba(0, 0, 0, 0.3);
}
.summary {
  position: absolute;
  left: 0;
  right: 0;
  top: 0;
  display: flex;
  flex-direction: column;
  align-items: center;
  height: 200px;
  padding-top: 44px;
  background: linear-gradient(rgba(0, 0, 0, 0.3), transparent 24px), rgba(0, 0, 0, 0.66);
}
.summary-title {
  margin: 0 0 28px;
  font-size: 76px;
  line-height: 96px;
  font-weight: 400;
}
.map-actions {
  position: absolute;
  left: 12px;
  bottom: 65px;
  display: flex;
  gap: 8px;
  filter: drop-shadow(0 6px 8px rgba(0, 0, 0, 0.4));
}
.map-button {
  display: flex;
  align-items: center;
  justify-content: center;
  height: 156px;
  padding: 6px 38px 0;
  border-radius: 0 12px 12px 0;
  background: #f9f9f9;
  color: #333;
  font-size: 56px;
}
.map-button-icon {
  padding: 0 41px;
  border-radius: 12px 0 0 12px;
}
/* Map / list switch */
.views {
  position: relative;
  display: grid;
  grid-template-columns: 1fr 1fr;
  align-items: end;
  margin-top: -5px;
}
.view {
  display: flex;
  align-items: center;
  justify-content: center;
  height: 179px;
  background: #efefef;
  box-shadow: inset 3px 3px 2px #fff;
}
.view-active {
  height: 184px;
  border-top: 15px solid #008297;
  background: #03b0cb;
  box-shadow: inset 0 0 8px rgba(0, 100, 120, 0.6);
}
/* System navigation */
.system-nav {
  display: flex;
  align-items: center;
  justify-content: center;
  gap: 293px;
  height: 168px;
}
.system-nav svg {
  fill: none;
  stroke: #fff;
  stroke-width: 8;
  stroke-linejoin: round;
}
```
